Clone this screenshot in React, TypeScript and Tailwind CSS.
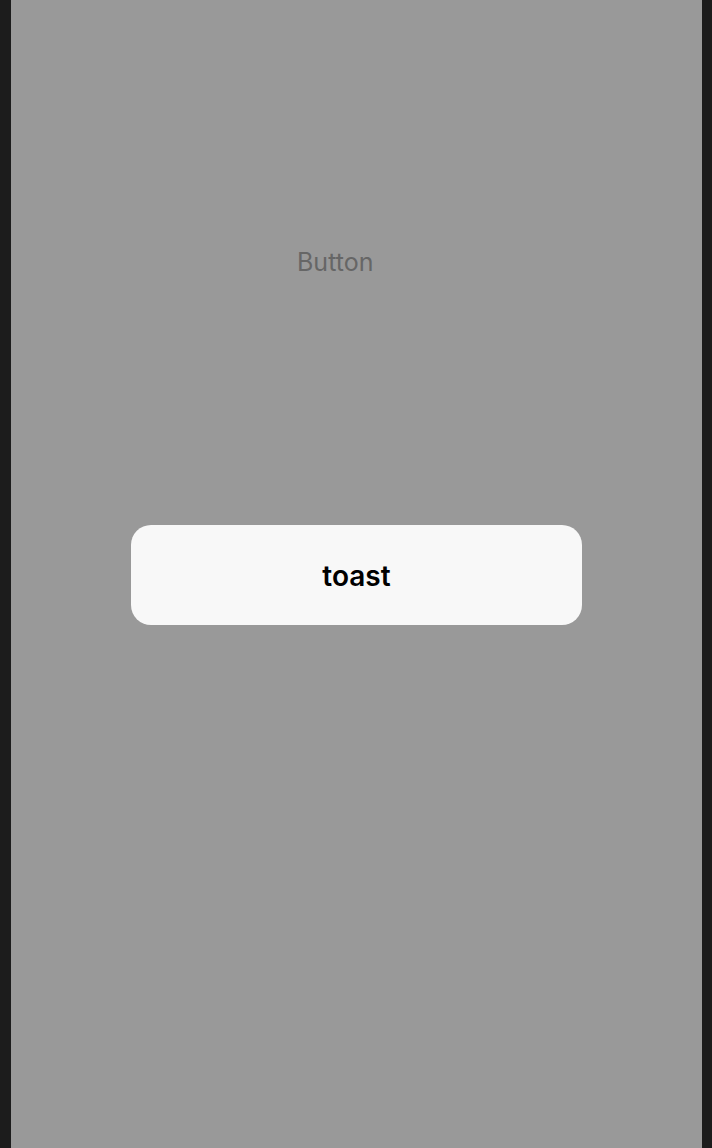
export default function App() {
  return (
    <div className="flex h-[1148px] w-[712px] bg-[#1c1c1c]" style={{ fontFamily: "Inter, 'Noto Sans', sans-serif" }}>
      <div className="relative ml-[11px] mr-[10px] flex-1 bg-[#999999]">
        <div className="pt-[250px] pl-[286px]">
          <span className="text-[25px] leading-none text-[#666666]">Button</span>
        </div>
        <div className="absolute left-[120px] top-[525px] flex h-[100px] w-[451px] items-center justify-center rounded-[20px] bg-[#f8f8f8] pt-[2px]">
          <span className="text-[28px] font-semibold leading-none text-black">toast</span>
        </div>
      </div>
    </div>
  );
}
